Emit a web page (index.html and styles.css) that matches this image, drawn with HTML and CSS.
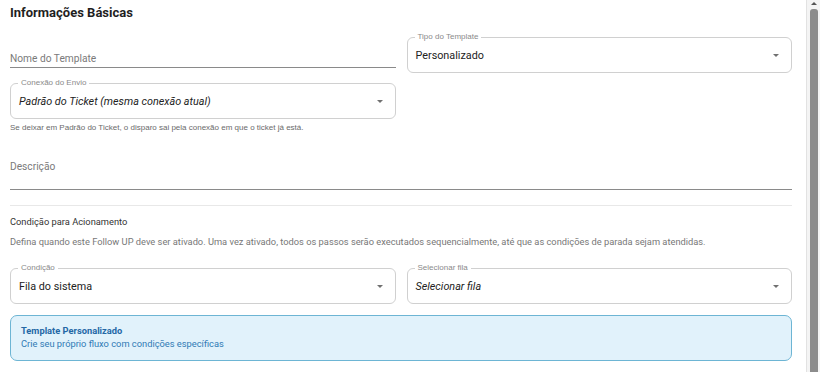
FILE: index.html
```html
<!DOCTYPE html>
<html lang="pt-BR">
<head>
  <meta charset="UTF-8">
  <title>Informações Básicas</title>
  <link rel="stylesheet" href="styles.css">
</head>
<body>
  <div class="page">
    <div class="form">
      <h2 class="title">Informações Básicas</h2>

      <div class="row row-first">
        <div class="field-line">
          <span class="line-label">Nome do Template</span>
        </div>
        <div class="field-outlined">
          <span class="legend">Tipo do Template</span>
          <span class="value">Personalizado</span>
          <span class="caret"></span>
        </div>
      </div>

      <div class="row">
        <div class="field-outlined">
          <span class="legend">Conexão do Envio</span>
          <span class="value italic">Padrão do Ticket (mesma conexão atual)</span>
          <span class="caret"></span>
        </div>
        <div></div>
      </div>
      <p class="helper">Se deixar em Padrão do Ticket, o disparo sai pela conexão em que o ticket já está.</p>

      <div class="field-line field-desc">
        <span class="line-label">Descrição</span>
      </div>

      <hr class="divider">

      <h3 class="subtitle">Condição para Acionamento</h3>
      <p class="note">Defina quando este Follow UP deve ser ativado. Uma vez ativado, todos os passos serão executados sequencialmente, até que as condições de parada sejam atendidas.</p>

      <div class="row row-cond">
        <div class="field-outlined">
          <span class="legend">Condição</span>
          <span class="value">Fila do sistema</span>
          <span class="caret"></span>
        </div>
        <div class="field-outlined">
          <span class="legend">Selecionar fila</span>
          <span class="value italic">Selecionar fila</span>
          <span class="caret"></span>
        </div>
      </div>

      <div class="info-box">
        <div class="info-title">Template Personalizado</div>
        <div class="info-text">Crie seu próprio fluxo com condições específicas</div>
      </div>
    </div>

    <div class="scrollbar">
      <span class="scroll-up"></span>
      <span class="scroll-thumb"></span>
    </div>
  </div>
</body>
</html>
```

FILE: styles.css
```css
* {
  box-sizing: border-box;
  margin: 0;
  padding: 0;
}

html,
body {
  height: 100%;
  overflow: hidden;
}

body {
  font-family: Roboto, 'Liberation Sans', Arial, sans-serif;
  background: #fff;
  color: #222;
}

.page {
  display: flex;
  height: 372px;
}

.form {
  flex: 1;
  padding: 5px 14px 0 10px;
}

.title {
  font-size: 13px;
  font-weight: bold;
  color: #1f1f1f;
  line-height: 16px;
}

.row {
  display: grid;
  grid-template-columns: 1fr 1fr;
  column-gap: 11px;
}

.row-first {
  margin-top: 16px;
  align-items: end;
}

.row-first + .row {
  margin-top: 10px;
}

/* standard underline input */
.field-line {
  height: 30px;
  border-bottom: 1px solid #8a8a8a;
  display: flex;
  align-items: flex-end;
  padding-bottom: 3px;
  margin-bottom: 5px;
}

.line-label {
  font-size: 10.2px;
  color: #7a7a7a;
}

.field-desc {
  margin-top: 12px;
  height: 45px;
  padding-bottom: 17px;
  margin-bottom: 0;
}

/* outlined select */
.field-outlined {
  position: relative;
  height: 36px;
  border: 1px solid #d0d0d0;
  border-radius: 6px;
  display: flex;
  align-items: center;
  padding: 1px 8px 0 8px;
}

.legend {
  position: absolute;
  top: -6px;
  left: 7px;
  padding: 0 3px;
  background: #fff;
  font-family: 'Liberation Sans', Arial, sans-serif;
  font-size: 8px;
  line-height: 10px;
  color: #8a8a8a;
}

.value {
  flex: 1;
  font-size: 10.8px;
  color: #222;
}

.value.italic {
  font-style: italic;
}

.caret {
  width: 0;
  height: 0;
  border-left: 3.5px solid transparent;
  border-right: 3.5px solid transparent;
  border-top: 3.5px solid #707070;
  margin-right: 4px;
}

.helper {
  font-family: 'Liberation Sans', Arial, sans-serif;
  font-size: 8px;
  color: #6a6a6a;
  margin-top: 4px;
  line-height: 10px;
}

.divider {
  border: none;
  border-top: 1px solid #e8e8e8;
  margin-top: 15px;
}

.subtitle {
  font-size: 9.3px;
  font-weight: normal;
  color: #333;
  margin-top: 10px;
  line-height: 12px;
}

.note {
  font-size: 9.3px;
  color: #777;
  margin-top: 8px;
  line-height: 12px;
}

.row-cond {
  margin-top: 20px;
}

.info-box {
  margin-top: 11px;
  height: 46px;
  background: #e1f2fb;
  border: 1px solid #6db5d4;
  border-radius: 7px;
  padding: 9px 10px;
}

.info-title {
  font-size: 9.3px;
  font-weight: bold;
  color: #2468a6;
  line-height: 12px;
}

.info-text {
  font-size: 9.3px;
  color: #2f7ab5;
  line-height: 12px;
  margin-top: 1px;
}

/* fake scrollbar on the right edge */
.scrollbar {
  width: 14px;
  display: flex;
  flex-direction: column;
  align-items: center;
  background: #f4f4f4;
  border-left: 1px solid #e2e2e2;
}

.scroll-up {
  width: 0;
  height: 0;
  border-left: 3px solid transparent;
  border-right: 3px solid transparent;
  border-bottom: 3px solid #555;
  margin-top: 2px;
}

.scroll-thumb {
  flex: 1;
  width: 8px;
  margin-top: 4px;
  background: #8c8c8c;
  border-radius: 3px 3px 0 0;
}
```
